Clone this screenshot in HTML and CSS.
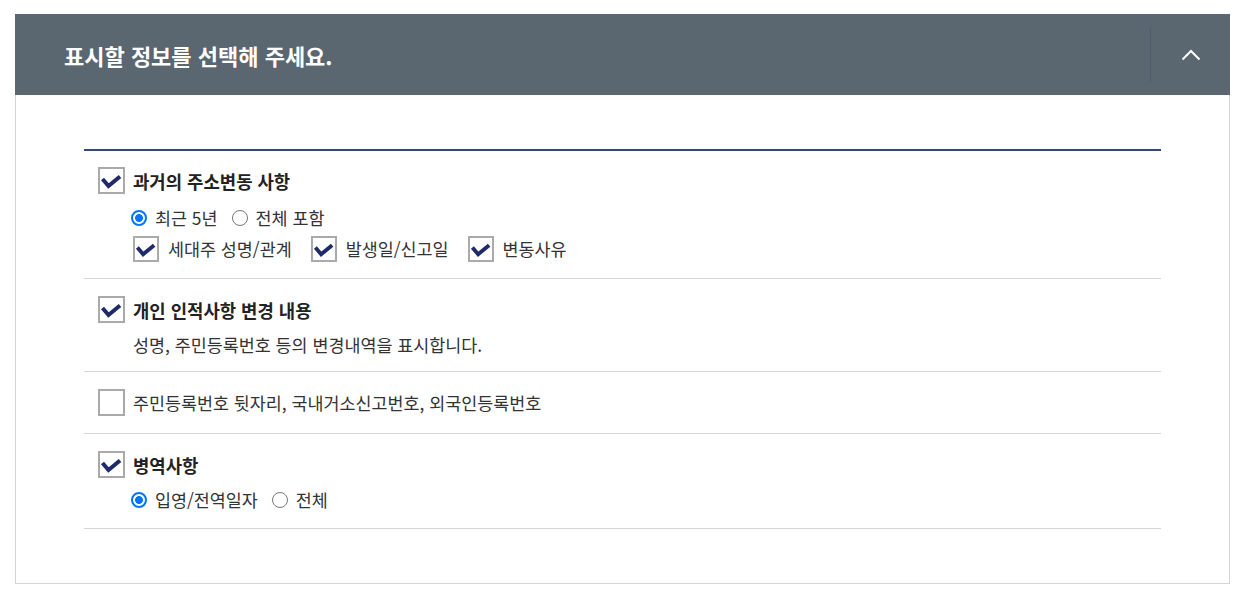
FILE: index.html
```html
<!DOCTYPE html>
<html lang="ko">
<head>
<meta charset="utf-8">
<link rel="stylesheet" href="styles.css">
</head>
<body>
<section class="panel">
  <header class="panel-head">
    <h2 class="panel-title">표시할 정보를 선택해 주세요.</h2>
    <button class="toggle" type="button" aria-label="접기">
      <svg width="20" height="12" viewBox="0 0 20 12"><path d="M1.5 10.5 L10 2 L18.5 10.5" fill="none" stroke="#fff" stroke-width="2"/></svg>
    </button>
  </header>
  <div class="panel-body">
    <ul class="opt-list">
      <li class="item">
        <label class="main-row">
          <span class="box"><svg viewBox="0 0 23 23"><path d="M2.5 10 L8.5 17 L20 7.5" fill="none" stroke="#1f2a6b" stroke-width="4"/></svg></span>
          <span class="title">과거의 주소변동 사항</span>
        </label>
        <div class="radios first">
          <label class="radio"><input type="radio" name="r1" checked><span>최근 5년</span></label>
          <label class="radio"><input type="radio" name="r1"><span>전체 포함</span></label>
        </div>
        <div class="subchecks">
          <label class="sub"><span class="box"><svg viewBox="0 0 23 23"><path d="M2.5 10 L8.5 17 L20 7.5" fill="none" stroke="#1f2a6b" stroke-width="4"/></svg></span><span>세대주 성명/관계</span></label>
          <label class="sub"><span class="box"><svg viewBox="0 0 23 23"><path d="M2.5 10 L8.5 17 L20 7.5" fill="none" stroke="#1f2a6b" stroke-width="4"/></svg></span><span>발생일/신고일</span></label>
          <label class="sub"><span class="box"><svg viewBox="0 0 23 23"><path d="M2.5 10 L8.5 17 L20 7.5" fill="none" stroke="#1f2a6b" stroke-width="4"/></svg></span><span>변동사유</span></label>
        </div>
      </li>
      <li class="item item-desc">
        <label class="main-row">
          <span class="box"><svg viewBox="0 0 23 23"><path d="M2.5 10 L8.5 17 L20 7.5" fill="none" stroke="#1f2a6b" stroke-width="4"/></svg></span>
          <span class="title">개인 인적사항 변경 내용</span>
        </label>
        <p class="desc">성명, 주민등록번호 등의 변경내역을 표시합니다.</p>
      </li>
      <li class="item item-single">
        <label class="main-row">
          <span class="box"></span>
          <span class="plain">주민등록번호 뒷자리, 국내거소신고번호, 외국인등록번호</span>
        </label>
      </li>
      <li class="item">
        <label class="main-row">
          <span class="box"><svg viewBox="0 0 23 23"><path d="M2.5 10 L8.5 17 L20 7.5" fill="none" stroke="#1f2a6b" stroke-width="4"/></svg></span>
          <span class="title">병역사항</span>
        </label>
        <div class="radios">
          <label class="radio"><input type="radio" name="r2" checked><span>입영/전역일자</span></label>
          <label class="radio"><input type="radio" name="r2"><span>전체</span></label>
        </div>
      </li>
    </ul>
  </div>
</section>
</body>
</html>
```
FILE: styles.css
```css
* { box-sizing: border-box; }
html, body { margin: 0; padding: 0; background: #fff; }
body {
  font-family: "Noto Sans CJK KR", "Noto Sans", sans-serif;
  color: #333;
  font-size: 17.4px;
}
.panel {
  width: 1215px;
  margin: 14px 0 0 15px;
}
.panel-head {
  height: 81px;
  background: #5a6670;
  display: flex;
  align-items: stretch;
  padding-left: 49px;
}
.panel-title {
  flex: 1;
  margin: 0;
  align-self: center;
  color: #fff;
  font-size: 22px;
  font-weight: 700;
  letter-spacing: 0;
}
.toggle {
  width: 80px;
  margin: 14px 0 13px;
  border: 0;
  border-left: 1px solid #4b5b72;
  background: transparent;
  padding: 0;
  display: flex;
  align-items: center;
  justify-content: center;
  cursor: pointer;
}
.panel-body {
  border: 1px solid #d5d5d5;
  border-top: 0;
  padding: 54px 68px 54px;
}
.opt-list {
  list-style: none;
  margin: 0;
  padding: 0;
  border-top: 2px solid #34497a;
}
.item {
  padding: 17px 0 16px;
  border-bottom: 1px solid #d6d6d6;
}
.item:first-child { padding-top: 16px; }
.item-desc { padding-bottom: 14px; }
.item-single { padding-bottom: 17px; }
.main-row {
  display: flex;
  align-items: center;
  padding-left: 14px;
  gap: 8px;
  height: 27px;
  line-height: 24px;
}
.box {
  width: 27px;
  height: 27px;
  border: 2px solid #aaa;
  background: #fff;
  flex: none;
  display: flex;
}
.box svg { width: 23px; height: 23px; display: block; }
.title { font-weight: 700; color: #222; font-size: 17.8px; }
.plain { color: #333; }
.radios {
  display: flex;
  align-items: center;
  gap: 14px;
  padding-left: 47px;
  margin-top: 10px;
  height: 24px;
  line-height: 24px;
}
.radios.first { margin-top: 12px; }
.radio {
  display: flex;
  align-items: center;
  gap: 8px;
}
.radio input {
  appearance: none;
  -webkit-appearance: none;
  width: 16px;
  height: 16px;
  margin: 0;
  border: 1px solid #767676;
  border-radius: 50%;
  background: #fff;
  flex: none;
}
.radio input:checked {
  border: 2px solid #0075ff;
  background: radial-gradient(circle, #0075ff 0 3.6px, #fff 4.2px);
}
.subchecks {
  display: flex;
  align-items: center;
  gap: 19px;
  padding-left: 49px;
  margin-top: 5px;
  height: 27px;
  line-height: 24px;
}
.sub {
  display: flex;
  align-items: center;
  gap: 9px;
}
.sub .box { width: 26px; height: 26px; }
.sub .box svg { width: 22px; height: 22px; }
.desc {
  margin: 10px 0 0;
  padding-left: 49px;
  line-height: 24px;
  color: #333;
}
```
